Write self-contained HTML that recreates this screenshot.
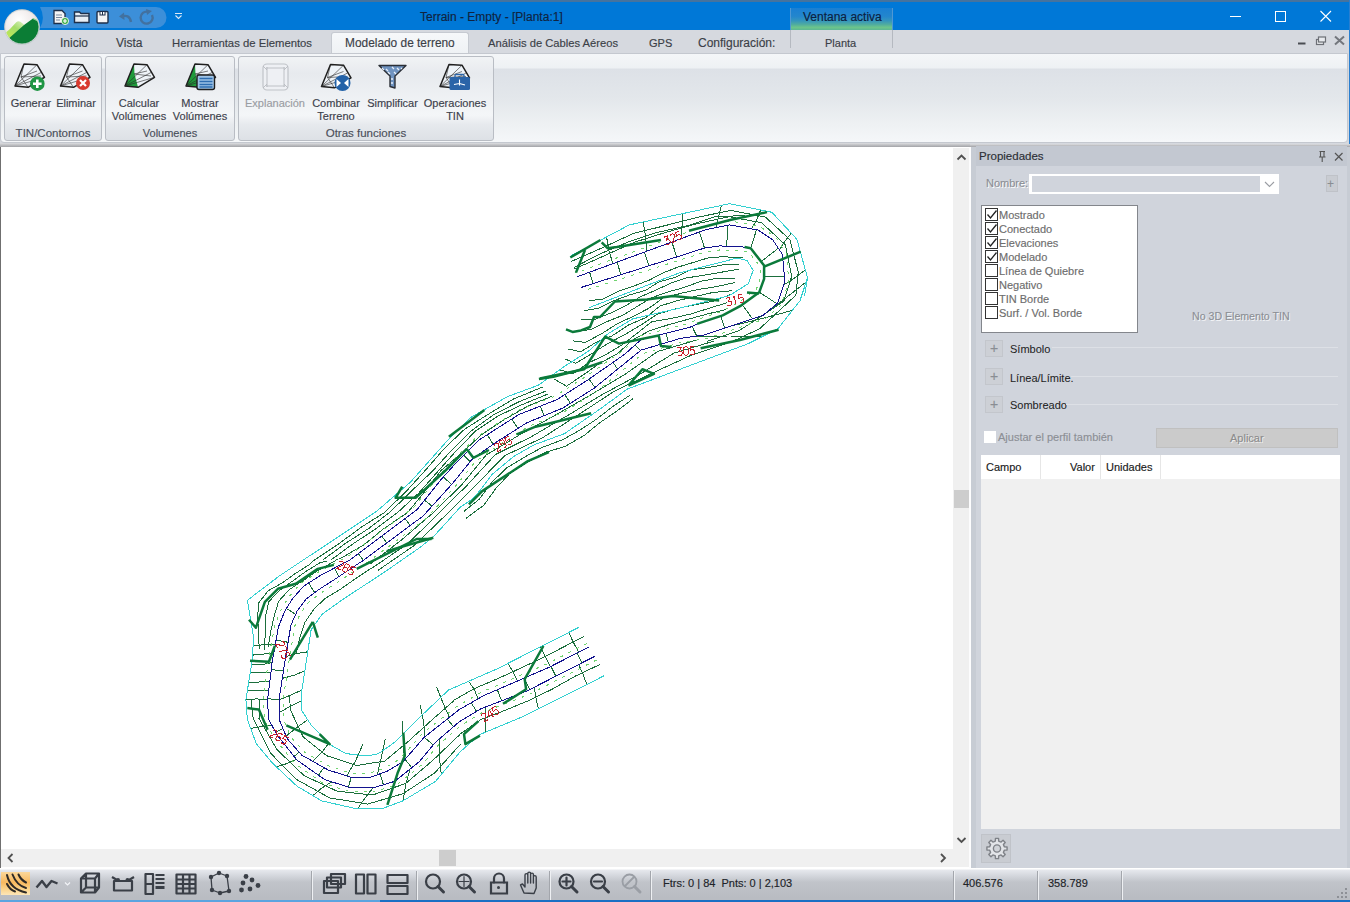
<!DOCTYPE html>
<html><head><meta charset="utf-8">
<style>
*{margin:0;padding:0;box-sizing:border-box}
html,body{width:1350px;height:902px;overflow:hidden;background:#fff;font-family:"Liberation Sans",sans-serif;font-size:12px;color:#333;-webkit-text-stroke:0.15px currentColor}
.a{position:absolute}
.t{position:absolute;white-space:nowrap;line-height:1}
#title{left:0;top:0;width:1350px;height:30px;background:#0078d7}
#tabs{left:0;top:30px;width:1350px;height:25px;background:#d6d9df}
#ribbon{left:0;top:54px;width:1350px;height:90px;background:#d6d9df}
.grp{position:absolute;top:2px;height:85px;border:1px solid #b9bdc4;border-radius:3px;background:linear-gradient(#f1f3f5,#e7eaee 20%,#f4f6f8 70%,#e6e9ed 82%,#dde1e6)}
.gl{position:absolute;left:0;right:0;bottom:1px;text-align:center;font-size:11.5px;color:#4a4f5a;line-height:1}
.btn{position:absolute;text-align:center;font-size:11px;color:#3c414b;line-height:13px;white-space:nowrap}
.tab{position:absolute;top:7px;font-size:12px;color:#3b3f47;white-space:nowrap;line-height:12px}
#canvas{left:0;top:147px;width:970px;height:721px;background:#fff}
#panel{left:970px;top:144px;width:380px;height:724px;background:#d0d4dc}
#status{left:0;top:868px;width:1350px;height:34px;background:linear-gradient(#ffffff 0,#ffffff 1px,#e6e8ed 2px,#d3d6dc 8px,#c1c4ca 14px,#b9bcc2 30px)}
.ck{position:absolute;left:3px;width:13px;height:13px;border:1px solid #333;background:#fff}
.cl{position:absolute;left:17px;font-size:11px;color:#6d6d6d;line-height:12px;white-space:nowrap}
.plus{position:absolute;left:15px;width:18px;height:17px;border:1px solid #c3c6cc;background:#cdd0d6;color:#8a8d93;font-size:14px;text-align:center;line-height:15px}
.sec{position:absolute;left:40px;font-size:11px;-webkit-text-stroke:0.05px currentColor;color:#1e1e1e;line-height:12px}
.sep{position:absolute;height:1px;background:#dde0e6}
.sb{position:absolute;top:3px;width:2px;height:29px;border-left:1px solid #a3a6ac;border-right:1px solid #eef0f3}
</style></head><body>
<!-- TITLE BAR -->
<div id="title" class="a">
 <div class="a" style="left:0;top:0;width:1350px;height:2px;background:#46739e"></div>
 <svg class="a" style="left:0;top:0" width="200" height="30">
  <path d="M40 7 H156 A10 10 0 0 1 156 28 H40 A22 22 0 0 0 40 7Z" fill="#3c8fd9"/>
  <!-- new doc -->
  <path d="M54 10.5h8l3 3v10h-11z" fill="#f4f4f4" stroke="#1d2f4a" stroke-width="1.3"/>
  <path d="M56 15h6M56 17.5h6M56 20h4" stroke="#7a8aa0" stroke-width="1"/>
  <circle cx="65" cy="21" r="3.6" fill="#3fae49" stroke="#fff" stroke-width="0.8"/>
  <path d="M63 21h4M65 19v4" stroke="#fff" stroke-width="1.2"/>
  <!-- open -->
  <path d="M74.5 12h5l1.5 1.5h8v9h-14.5z" fill="#e8eef5" stroke="#1d2f4a" stroke-width="1.4"/>
  <path d="M75 16h14" stroke="#1d2f4a" stroke-width="1.2"/>
  <!-- save -->
  <rect x="97" y="11.5" width="11" height="11.5" rx="1" fill="#f4f4f4" stroke="#1d2f4a" stroke-width="1.4"/>
  <rect x="99.5" y="11.5" width="6" height="4" fill="#1d2f4a"/>
  <rect x="100.5" y="12" width="1.5" height="2.5" fill="#fff"/><rect x="103" y="12" width="1.5" height="2.5" fill="#fff"/>
  <!-- undo -->
  <path d="M131 22 C130 16 126 15 122 16.5" fill="none" stroke="#42719f" stroke-width="2.4"/>
  <path d="M119 16.5 L124 12.5 L124.5 20z" fill="#42719f"/>
  <!-- redo -->
  <path d="M152 15 A6 6 0 1 1 148 11.8" fill="none" stroke="#42719f" stroke-width="2.4"/>
  <path d="M146 9 L152 11 L147 15z" fill="#42719f"/>
  <path d="M175 13.5h7M175.5 15.5l3 3 3-3" stroke="#dce8f5" stroke-width="1.1" fill="none"/>
 </svg>
 <div class="t" style="left:420px;top:11px;font-size:12px;color:#10233f">Terrain - Empty - [Planta:1]</div>
 <div class="a" style="left:790px;top:8px;width:103px;height:22px;background:linear-gradient(#1a7fd3 0%,#2386cd 38%,#3495bd 58%,#50ac9f 75%,#6cc58b 88%,#5cb795 100%);border-left:1px solid #4f98d4;border-right:1px solid #4f98d4"></div>
 <div class="t" style="left:803px;top:11px;font-size:12px;color:#0b2040">Ventana activa</div>
 <svg class="a" style="left:1220px;top:0" width="130" height="30">
  <path d="M10 16.5h11" stroke="#fff" stroke-width="1"/>
  <rect x="55.5" y="11.5" width="10" height="10" fill="none" stroke="#fff" stroke-width="1"/>
  <path d="M100.5 11l10.5 10.5M111 11l-10.5 10.5" stroke="#fff" stroke-width="1.1"/>
 </svg>
</div>
<!-- TABS -->
<div id="tabs" class="a">
 <div class="a" style="left:331px;top:2px;width:138px;height:23px;background:linear-gradient(#f6f8fa,#eef1f4);border:1px solid #c6cad1;border-bottom:none;border-radius:3px 3px 0 0"></div>
 <div class="tab" style="left:60px">Inicio</div>
 <div class="tab" style="left:116px">Vista</div>
 <div class="tab" style="left:172px;font-size:11.3px">Herramientas de Elementos</div>
 <div class="tab" style="left:345px;font-size:11.9px">Modelado de terreno</div>
 <div class="tab" style="left:488px;font-size:11.2px">Análisis de Cables Aéreos</div>
 <div class="tab" style="left:649px;font-size:11px">GPS</div>
 <div class="tab" style="left:698px">Configuración:</div>
 <div class="tab" style="left:825px;font-size:11px">Planta</div>
 <div class="a" style="left:790px;top:0;width:1px;height:18px;background:#b5b9c0"></div>
 <div class="a" style="left:892px;top:0;width:1px;height:18px;background:#b5b9c0"></div>
 <svg class="a" style="left:1290px;top:0" width="60" height="25">
  <path d="M8 13.5h7.5" stroke="#4a4d52" stroke-width="2"/>
  <rect x="26.5" y="9.5" width="7" height="5" fill="#e8eaee" stroke="#6d7076" stroke-width="1.2"/>
  <rect x="28.5" y="7" width="7" height="5" fill="#e8eaee" stroke="#6d7076" stroke-width="1.2"/>
  <path d="M45 6.5l9 8M54 6.5l-9 8" stroke="#74777d" stroke-width="2"/>
 </svg>
</div>
<!-- logo -->
<svg class="a" style="left:3px;top:7.5px" width="40" height="40">
 <defs>
  <radialGradient id="lg1" cx="0.4" cy="0.3" r="0.75"><stop offset="0" stop-color="#ffffff"/><stop offset="0.6" stop-color="#efe9e9"/><stop offset="1" stop-color="#c9cdd0"/></radialGradient>
  <linearGradient id="lg2" x1="0" y1="1" x2="1" y2="0"><stop offset="0" stop-color="#c6ec4e"/><stop offset="0.6" stop-color="#a5dc6a"/><stop offset="1" stop-color="#dff2c8"/></linearGradient>
  <clipPath id="lc"><circle cx="19" cy="19" r="17"/></clipPath>
 </defs>
 <circle cx="19" cy="19" r="17.8" fill="#b7c0c4"/>
 <circle cx="19" cy="19" r="17" fill="url(#lg1)"/>
 <g clip-path="url(#lc)">
  <path d="M0 27 L7 21 L13 14.5 Q16 12 19 15 L22 17.5 L8 31 Z" fill="url(#lg2)"/>
  <path d="M4 32 L12 25 L21 17 L30 10.5 L36 13 L40 20 L40 40 L0 40 Z" fill="#0b7d35"/>
  <path d="M30 10.5 L35 13 L37 19" fill="none" stroke="#8fd49a" stroke-width="1.2"/>
 </g>
 <circle cx="19" cy="19" r="17" fill="none" stroke="#d9dedf" stroke-width="0.8"/>
</svg>
<!-- RIBBON -->
<div id="ribbon" class="a">
 <div class="a" style="left:0;top:-1px;width:1348px;height:90px;border:1px solid #c4c8cf;border-radius:0 0 4px 4px;background:linear-gradient(#f4f6f8 0,#eef1f4 14px,#dde1e7 15px,#e3e7eb 50%,#eef1f3 80%,#f5f7f9 100%)"></div>
 <div class="grp" style="left:4px;width:98px"><div class="gl">TIN/Contornos</div></div>
 <div class="grp" style="left:105px;width:130px"><div class="gl" style="font-size:11px">Volumenes</div></div>
 <div class="grp" style="left:238px;width:256px"><div class="gl" style="font-size:11.5px">Otras funciones</div></div>
 <div class="btn" style="left:10px;top:43px;width:42px">Generar</div>
 <div class="btn" style="left:55px;top:43px;width:42px">Eliminar</div>
 <div class="btn" style="left:111px;top:43px;width:56px">Calcular<br>Volúmenes</div>
 <div class="btn" style="left:172px;top:43px;width:56px">Mostrar<br>Volúmenes</div>
 <div class="btn" style="left:244px;top:43px;width:62px;color:#9a9da3">Explanación</div>
 <div class="btn" style="left:310px;top:43px;width:52px">Combinar<br>Terreno</div>
 <div class="btn" style="left:365px;top:43px;width:55px">Simplificar</div>
 <div class="btn" style="left:422px;top:43px;width:66px">Operaciones<br>TIN</div>
 <svg class="a" style="left:0;top:0" width="500" height="45">
  <defs>
   <g id="tin">
    <path d="M0 22 L9 0 L22 0.7 L29.5 13.3 L13 23.3 Z" fill="#eef3f8" stroke="#1f1f1f" stroke-width="1.5" stroke-linejoin="round"/>
    <path d="M0 22 L22 0.7 M0 22 L26 8.5 M0 22 L29.5 13.3 M9 0 L6 13 L13 23.3 M6 13 L22 7 M6 13 L26 12" fill="none" stroke="#2a2a2a" stroke-width="0.6"/>
   </g>
   <g id="tingreen">
    <path d="M0 22 L9 0 L22 0.7 L29.5 13.3 L13 23.3 Z" fill="#eef3f8"/>
    <path d="M0 22 L9 0 L9.5 10 L13 23.3 Z" fill="#1f9a3a"/>
    <path d="M0 22 L9 0 L22 0.7 L29.5 13.3 L13 23.3 Z" fill="none" stroke="#1f1f1f" stroke-width="1.5" stroke-linejoin="round"/>
    <path d="M0 22 L22 0.7 M0 22 L26 8.5 M0 22 L29.5 13.3 M9 10 L22 7 M9 10 L26 12" fill="none" stroke="#2a2a2a" stroke-width="0.6"/>
   </g>
  </defs>
  <use href="#tin" x="15" y="10"/>
  <circle cx="37.3" cy="29.7" r="7.3" fill="#1f9644"/>
  <path d="M33 29.7h8.6M37.3 25.4v8.6" stroke="#fff" stroke-width="2.6"/>
  <use href="#tin" x="60.5" y="10"/>
  <circle cx="83" cy="29" r="7" fill="#d8392e"/>
  <path d="M80 26l6 6M86 26l-6 6" stroke="#fff" stroke-width="2.2"/>
  <use href="#tingreen" x="125" y="10"/>
  <use href="#tingreen" x="186" y="10"/>
  <rect x="197" y="21" width="17.5" height="14.5" rx="2" fill="#9ec3e6" stroke="#1f1f1f" stroke-width="1.4"/>
  <path d="M199.5 24.5h13M199.5 27.5h13M199.5 30.5h13M199.5 33h13" stroke="#2e6db0" stroke-width="1.3"/>
  <!-- explanacion -->
  <rect x="263" y="10" width="25" height="26" rx="4" fill="#eef0f4" stroke="#c0c3c8" stroke-width="1.2"/>
  <path d="M266 14h19M266 32h19M267 13v20M284 13v20M263 12l4 4M288 12l-4 4M263 34l4-4M288 34l-4-4" stroke="#b8bbc1" stroke-width="0.9"/>
  <!-- combinar -->
  <use href="#tin" x="321.5" y="10.5"/>
  <circle cx="342.5" cy="29" r="8" fill="#2362a8"/>
  <path d="M336.5 25v8l4.5-4zM348.5 25v8l-4.5-4z" fill="#fff"/>
  <!-- simplificar -->
  <path d="M379 11.5 H406 L395 22 V34 L390 32.5 V22 Z" fill="#6f93c0" stroke="#2b2f36" stroke-width="1.4" stroke-linejoin="round"/>
  <path d="M382 14l2 2M386 15l2 2M392 13l2 2M397 14l2 2M401 14l1 1M388 18l2 2M394 18l2 2M391 25l2 0M391 29l2 0" stroke="#e8f0fa" stroke-width="1.3"/>
  <!-- operaciones -->
  <use href="#tin" x="440" y="10.5"/>
  <rect x="449.5" y="23" width="20.5" height="13" rx="1.5" fill="#2a64a8"/>
  <rect x="455" y="20.5" width="9" height="3.5" rx="1" fill="none" stroke="#2a64a8" stroke-width="1.3"/>
  <path d="M459.5 25.5v6M454 30.5l5.5-1 5.5 1.5" stroke="#fff" stroke-width="1.1" fill="none"/>
 </svg>
</div>
<div class="a" style="left:0;top:143px;width:970px;height:4px;background:linear-gradient(#dcdde0,#a2a3a7)"></div>
<div class="a" style="left:1349px;top:0;width:1px;height:902px;background:#2a7fd0"></div>
<!-- CANVAS -->
<div id="canvas" class="a">
 <div class="a" style="left:0;top:0;width:1px;height:721px;background:#6f6f6f"></div>
 <!-- vscroll -->
 <div class="a" style="left:953px;top:1px;width:17px;height:702px;background:#f0f0f0"></div>
 <svg class="a" style="left:953px;top:1px" width="17" height="702">
  <path d="M4.5 11.5l4-4 4 4" fill="none" stroke="#505050" stroke-width="1.8"/>
  <rect x="1" y="342" width="15" height="18" fill="#cdcdcd"/>
  <path d="M4.5 690l4 4 4-4" fill="none" stroke="#505050" stroke-width="1.8"/>
 </svg>
 <!-- hscroll -->
 <div class="a" style="left:1px;top:702px;width:969px;height:18px;background:#f0f0f0"></div>
 <svg class="a" style="left:1px;top:702px" width="969" height="18">
  <path d="M11.5 5l-4 4 4 4" fill="none" stroke="#505050" stroke-width="1.8"/>
  <rect x="438" y="1" width="17" height="16" fill="#cdcdcd"/>
  <path d="M940 5l4 4-4 4" fill="none" stroke="#505050" stroke-width="1.8"/>
 </svg>
 <div class="a" style="left:969px;top:0;width:1px;height:721px;background:#fcfcfd"></div>
 <svg class="a" style="left:0;top:-147px" width="953" height="849" viewBox="0 0 953 849">
<defs><clipPath id="cv"><rect x="1" y="148" width="952" height="701"/></clipPath></defs><g clip-path="url(#cv)" fill="none" stroke-linejoin="round">
<g stroke="#1b6e3c" stroke-width="1" shape-rendering="crispEdges"><polyline points="583.8,636.5 562.9,647.3 541.1,658.6 518.6,669.1 496.7,679.1 474.7,688.4 453.8,700.3"/><polyline points="599.7,664.6 575.2,676.2 552.2,689.2 528.6,700.6 505.2,710.3 480.8,719.6 458.9,734.9"/><polyline points="460.1,734.3 433.2,760.0 405.7,783.5 372.6,795.0 337.1,791.2 303.9,775.5 277.1,749.7 259.0,718.5 259.4,699.9"/><polyline points="460.6,744.1 434.8,772.8 403.2,793.6 367.7,804.1 329.6,797.9 296.1,779.2 270.4,753.0 253.2,718.4 251.1,700.1"/><polyline points="454.0,700.6 431.3,720.5 408.5,741.2 384.8,761.0 356.8,765.5 326.6,755.7 303.2,737.0 290.4,709.9 289.5,694.8"/><polyline points="268.2,647.1 270.8,631.3 274.3,615.6 278.7,601.2 289.3,589.6 302.1,581.2 317.3,571.0 330.5,563.5 337.9,559.1"/><polyline points="264.6,649.8 265.2,632.6 265.6,616.2 268.8,601.6 280.3,589.8 291.2,582.1 305.9,571.4 319.8,562.9 326.7,561.1"/><polyline points="259.2,649.5 258.6,632.9 257.7,618.3 258.5,603.0 268.4,590.6 282.3,582.9 295.5,573.4 309.0,564.8 314.3,560.0"/><polyline points="296.1,653.6 299.6,638.6 304.9,622.3 313.7,609.5 324.9,598.5 340.3,589.4 353.8,579.8 366.5,571.3 373.7,566.8"/><polyline points="339.5,559.0 363.7,545.0 383.3,529.0 407.7,512.5 424.1,492.4 441.2,470.4 462.3,452.5 480.9,435.2 503.3,420.1 528.5,405.8 552.1,396.3"/><polyline points="330.5,560.3 353.2,543.7 375.4,529.1 398.6,511.6 418.6,493.2 436.7,472.8 455.8,451.2 475.9,430.7 498.6,415.7 521.8,404.8 548.2,393.9"/><polyline points="322.6,560.2 344.7,543.9 368.7,528.5 390.6,511.6 411.4,491.1 432.4,471.2 450.9,451.0 472.1,430.2 494.3,414.3 519.1,401.7 545.5,391.2"/><polyline points="312.6,561.3 337.3,544.9 362.0,526.7 384.7,512.4 407.0,490.5 425.0,470.7 444.3,448.5 464.6,429.2 490.1,413.1 513.8,398.9 542.5,387.1"/><polyline points="369.9,564.3 400.8,540.5 432.2,513.7 461.3,485.3 486.3,454.9 521.5,433.7 556.0,414.8 592.2,394.0 625.6,373.9 657.4,351.6 697.3,339.8"/><polyline points="372.9,567.5 408.4,543.2 437.7,514.2 466.3,486.1 495.3,454.6 531.7,436.5 568.8,414.8 602.0,394.7 639.2,374.7 673.8,353.2 714.5,340.9"/><polyline points="377.9,570.4 414.2,545.5 443.9,516.9 473.9,487.2 504.6,455.7 542.5,437.8 578.5,414.7 614.3,391.2 651.6,373.4 689.8,355.9 730.6,341.9"/><polyline points="463.6,511.6 479.5,499.0 491.9,482.3 506.5,468.0 524.4,457.2 541.6,447.7 562.8,439.6 580.3,429.9 596.6,419.1 613.2,406.2 630.5,394.9"/><polyline points="466.1,518.2 483.6,505.4 495.8,488.5 509.7,473.5 526.4,462.8 545.5,452.2 564.5,446.7 584.1,435.5 599.8,422.7 616.7,411.2 633.0,398.7"/><polyline points="706.9,341.3 739.0,330.7 764.4,314.3 783.8,301.2 791.7,276.3 785.5,245.0 761.6,222.7 728.9,216.7 696.9,223.7 665.3,232.5 634.2,242.3 604.4,255.7 574.4,269.0"/><polyline points="729.4,342.9 759.7,328.7 784.5,305.8 795.9,295.1 798.2,272.1 790.0,239.8 765.6,217.2 731.3,210.4 698.7,217.0 666.3,225.3 633.0,233.6 602.5,247.7 571.2,261.5"/><polyline points="588.7,300.7 603.3,299.0 617.8,291.4 633.0,286.4 649.1,280.2 663.9,272.6 677.5,267.2 694.8,262.0 710.1,257.3 724.8,256.8 742.9,258.0"/><polyline points="584.5,310.6 598.2,308.4 613.5,300.9 630.2,294.7 645.8,290.3 658.2,282.2 675.9,277.1 690.7,269.8 706.3,267.9 722.8,264.9 739.1,264.0"/><polyline points="581.4,319.7 594.7,319.5 610.6,313.1 624.2,306.6 640.5,296.7 654.4,290.8 671.1,283.0 686.6,277.9 703.8,275.3 719.6,272.5 739.0,269.2"/><polyline points="577.3,331.0 590.5,329.7 604.8,322.5 622.4,315.4 636.2,307.1 651.4,297.9 666.3,292.4 683.8,287.6 700.7,281.3 718.6,278.0 735.5,278.1"/><polyline points="573.2,340.9 585.3,342.5 602.3,333.3 617.5,323.6 633.4,316.3 649.0,308.2 663.2,297.9 682.4,293.0 698.6,289.4 715.5,286.8 735.1,282.5"/><polyline points="568.5,349.0 580.6,351.9 595.7,342.5 612.0,335.9 628.8,324.8 645.7,317.7 660.0,306.0 677.0,300.8 695.4,296.4 712.8,292.5 731.7,290.8"/><polyline points="564.7,358.9 575.8,363.2 592.1,353.4 607.5,343.8 626.3,333.7 640.7,325.1 657.5,314.1 674.0,309.2 692.7,305.2 712.4,301.4 730.4,294.6"/><polyline points="558.6,369.4 572.8,373.9 588.5,362.8 604.4,355.5 622.0,345.0 638.3,332.4 651.6,321.8 671.5,318.4 691.6,313.8 709.0,308.3 727.0,302.7"/><polyline points="554.6,379.2 566.4,386.2 584.5,374.1 599.6,363.3 617.5,353.7 632.0,340.4 649.2,330.9 667.9,324.9 687.7,319.4 705.4,314.5 726.3,309.4"/><polyline points="745.5,215.4 714.4,216.9 686.9,225.9 656.6,232.6 628.1,242.1 600.5,253.7 573.6,267.6"/><polyline points="578.6,652.2 573.0,641.7 568.9,632.4"/><polyline points="550.4,666.6 545.7,657.6 540.5,646.8"/><polyline points="517.3,681.0 512.9,671.9 508.1,663.2"/><polyline points="478.0,698.9 474.2,689.2 468.6,681.3"/><polyline points="578.7,664.5 583.1,674.4 586.8,684.5"/><polyline points="534.3,687.2 536.0,698.2 538.4,708.9"/><polyline points="485.5,707.1 485.5,719.2 485.8,732.1"/><polyline points="439.3,739.0 439.3,756.7 441.3,774.5"/><polyline points="410.0,769.2 405.8,784.2 403.0,800.8"/><polyline points="373.0,787.8 364.4,798.9 357.4,809.0"/><polyline points="331.8,781.8 321.6,788.2 312.9,795.7"/><polyline points="296.4,759.4 286.2,763.8 276.3,766.8"/><polyline points="271.8,725.3 260.4,726.8 250.7,728.4"/><polyline points="449.4,717.3 442.8,702.4 436.7,687.2"/><polyline points="425.0,736.7 423.5,721.1 420.1,704.8"/><polyline points="404.4,760.0 403.4,740.8 402.3,721.0"/><polyline points="377.3,774.8 381.7,755.8 385.3,738.7"/><polyline points="346.8,775.9 355.6,760.7 362.8,744.4"/><polyline points="312.6,761.2 321.5,752.7 328.9,743.1"/><polyline points="286.1,736.0 296.7,727.6 307.7,719.7"/><polyline points="279.1,712.5 289.5,706.8 301.5,700.6"/><polyline points="267.6,699.8 256.5,698.9 245.9,699.8"/><polyline points="268.7,690.5 257.1,690.3 247.3,690.9"/><polyline points="269.8,681.2 258.8,682.0 248.8,682.0"/><polyline points="271.0,672.0 261.5,672.4 250.2,673.0"/><polyline points="272.1,662.7 262.7,664.4 251.6,664.1"/><polyline points="273.7,653.5 264.0,654.0 252.5,655.1"/><polyline points="275.3,644.3 263.6,644.6 253.1,646.1"/><polyline points="279.0,700.0 291.4,694.8 301.9,690.0"/><polyline points="282.3,678.3 293.4,675.5 304.8,670.9"/><polyline points="285.7,656.5 297.2,653.5 307.8,651.8"/><polyline points="695.1,336.3 728.3,336.0 763.1,336.2"/><polyline points="730.0,326.3 760.4,319.0 792.4,310.4"/><polyline points="764.2,314.3 785.7,298.1 806.9,281.3"/><polyline points="783.6,285.1 794.7,277.9 805.3,269.9"/><polyline points="779.4,250.0 785.3,240.6 791.3,233.2"/><polyline points="751.6,228.8 756.7,219.9 760.6,210.0"/><polyline points="715.8,227.7 718.6,216.6 721.5,205.4"/><polyline points="681.1,238.6 682.1,225.3 682.3,213.7"/><polyline points="647.0,251.2 645.6,236.1 643.2,222.0"/><polyline points="612.8,263.7 608.8,249.9 606.6,237.0"/><polyline points="576.9,653.1 581.9,662.9"/><polyline points="550.9,666.4 555.9,676.2"/><polyline points="524.2,678.1 529.9,689.4"/><polyline points="497.3,689.7 501.6,700.8"/><polyline points="471.2,702.7 476.5,711.4"/><polyline points="447.1,719.1 453.6,726.6"/><polyline points="424.2,737.3 433.3,744.9"/><polyline points="405.1,759.3 411.8,767.7"/><polyline points="380.0,773.8 383.4,784.8"/><polyline points="351.4,777.2 348.3,787.0"/><polyline points="323.9,767.6 318.5,775.2"/><polyline points="299.2,752.2 294.0,756.4"/><polyline points="282.9,728.5 275.7,732.4"/><polyline points="279.0,700.0 267.7,698.6"/><polyline points="283.4,671.1 271.3,669.6"/><polyline points="288.1,642.3 276.1,640.1"/><polyline points="295.7,614.3 286.4,608.5"/><polyline points="314.7,592.6 308.6,583.0"/><polyline points="339.0,576.5 334.5,568.0"/><polyline points="363.4,560.3 358.4,553.6"/><polyline points="386.8,542.9 381.8,536.1"/><polyline points="410.3,525.5 405.2,518.6"/><polyline points="432.0,506.1 424.6,500.2"/><polyline points="451.6,484.5 443.4,477.0"/><polyline points="470.1,461.8 463.6,455.3"/><polyline points="493.2,444.2 487.2,434.8"/><polyline points="517.9,428.5 511.8,419.0"/><polyline points="544.0,415.7 540.3,406.2"/><polyline points="570.4,403.3 564.8,394.5"/><polyline points="595.0,387.5 589.1,379.1"/><polyline points="617.7,369.1 613.0,362.4"/><polyline points="640.4,350.7 635.2,344.9"/><polyline points="668.2,342.0 666.0,333.3"/><polyline points="696.7,336.0 692.0,326.3"/><polyline points="724.8,328.1 720.8,316.0"/><polyline points="752.5,318.8 742.2,304.7"/><polyline points="776.9,303.7 759.3,292.2"/><polyline points="784.4,276.0 764.1,276.0"/><polyline points="778.3,248.2 761.1,261.6"/><polyline points="756.5,229.7 750.7,248.3"/><polyline points="727.7,225.3 726.7,246.2"/><polyline points="699.4,232.0 704.5,248.1"/><polyline points="671.9,242.0 676.7,256.9"/><polyline points="644.5,252.1 648.9,265.8"/><polyline points="617.0,262.1 621.0,274.7"/><polyline points="589.6,272.2 593.2,283.6"/></g>
<g stroke="#6fd36f" stroke-width="1" stroke-dasharray="3 6" shape-rendering="crispEdges"><polyline points="587.1,643.4 547.2,663.8 482.0,692.0 456.9,706.3 421.5,734.4 400.3,758.7 385.0,767.9 369.8,773.2 351.5,773.3 329.6,766.3 304.3,752.0 290.7,736.8 283.0,718.5 283.0,700.4 288.7,663.1 294.8,626.1 300.5,613.2 309.2,601.6 321.2,592.8 338.1,581.9 366.2,563.3 377.4,554.9 425.7,519.0 455.6,486.0 475.5,461.5 498.2,445.6 528.8,426.3 564.7,411.6 596.3,391.6 643.1,353.6 680.9,342.4 705.4,338.8 749.6,324.0 764.9,318.9 781.0,305.4 788.9,281.6 786.2,253.3 775.5,237.0 759.3,226.2 729.5,220.9 703.7,226.1 575.6,273.0"/><polyline points="596.6,659.9 528.4,694.7 482.4,712.5 461.6,725.0 438.4,745.0 422.1,764.6 396.8,784.8 374.2,791.8 350.1,791.7 322.9,783.2 294.3,763.0 274.2,737.9 264.6,720.4 263.6,699.5 268.3,660.4 274.6,625.8 281.1,609.4 289.3,596.4 300.7,583.3 318.4,572.0 338.7,561.2 347.6,556.7 389.7,525.2 414.1,507.0 438.6,476.2 454.3,458.9 476.6,436.8 517.1,410.9 554.6,396.3 585.1,377.0 622.4,351.0 639.6,335.9 688.9,323.4 695.6,320.1 721.2,311.7 738.9,302.2 756.3,289.6 760.2,278.1 760.4,267.0 748.0,251.2 744.3,251.1 720.3,249.9 706.1,251.7 582.4,291.2"/></g>
<g stroke="#33d0d0" stroke-width="1" shape-rendering="crispEdges"><polyline points="604.4,675.6 523.7,716.3 479.3,734.8 460.0,752.0 435.6,781.3 403.0,800.8 383.4,808.2 357.3,809.0 321.5,800.8 297.0,786.2 272.6,763.3 256.3,743.8 247.3,719.3 245.9,699.8 252.1,661.0 253.6,637.6 247.4,600.4 261.4,589.5 280.0,575.5 303.3,560.0 330.0,542.4 376.5,511.4 410.7,481.9 447.9,440.0 470.0,417.8 507.5,396.6 538.4,385.2 564.3,366.5 588.7,351.0 608.6,333.3 633.0,318.8 680.0,308.0 728.8,295.9 748.3,283.7 753.2,270.2 747.0,260.5 737.3,258.0 680.0,272.7 588.9,307.7"/><polyline points="579.3,627.1 497.0,668.9 448.6,690.0 419.3,717.7 394.8,742.2 378.5,753.6 367.1,756.0 345.9,753.6 331.3,745.4 311.7,725.9 301.1,709.6 301.9,690.0 311.1,629.9 322.0,614.3 343.7,598.8 384.1,572.4 420.0,547.4 433.3,536.8 444.8,524.3 459.9,507.5 473.2,498.6 482.0,488.0 491.5,475.0 513.7,456.4 534.1,444.8 564.4,433.7 603.0,407.0 626.7,389.3 748.1,343.7 777.8,328.9 800.0,300.7 807.5,277.8 804.6,295.2 807.5,277.8 796.9,239.3 771.9,212.3 729.5,203.7 629.3,224.9 569.6,256.6"/></g>
<g stroke="#12128e" stroke-width="1" shape-rendering="crispEdges"><polyline points="588.9,647.0 548.9,667.4 483.7,695.6 459.2,709.6 424.2,737.3 403.0,761.7 386.7,771.5 370.4,777.2 350.8,777.2 328.0,769.9 301.9,755.2 287.3,738.9 279.1,719.3 279.0,700.0 284.7,662.5 290.9,625.2 297.1,611.2 306.4,598.8 318.9,589.5 335.9,578.6 363.9,560.0 375.0,551.7 423.1,516.0 452.6,483.4 472.7,458.6 496.0,442.3 527.0,422.7 562.9,408.0 593.9,388.4 641.1,350.1 680.0,338.5 704.4,334.9 748.3,320.2 762.9,315.4 777.6,303.2 784.9,281.2 782.4,254.4 772.7,239.8 758.0,230.0 729.5,224.9 705.0,229.9 577.0,276.8"/><polyline points="594.8,656.3 526.7,691.1 480.7,708.9 459.2,721.8 435.6,742.2 419.3,761.7 394.8,781.3 373.6,787.8 350.8,787.8 324.7,779.6 297.0,760.1 277.5,735.6 268.5,719.3 267.6,699.8 272.3,661.0 278.5,626.8 284.7,611.2 292.5,598.8 303.3,586.4 320.4,575.5 340.6,564.7 349.9,560.0 392.1,528.4 416.9,509.8 441.7,478.8 457.2,461.7 479.0,440.0 518.9,414.5 556.4,399.9 587.3,380.3 624.8,354.2 641.1,339.6 690.0,327.3 697.0,323.9 722.7,315.4 741.0,305.6 759.3,292.2 764.1,278.8 764.1,265.4 750.7,248.3 744.6,247.1 720.2,245.9 705.0,247.9 581.2,287.4"/></g>
<g stroke="#0b7a3a" stroke-width="2.5"><polyline points="570.3,257.5 600.5,240.0"/><polyline points="585.0,250.0 576.0,272.6"/><polyline points="601.7,242.4 607.5,248.2 616.8,247.0 661.0,240.0"/><polyline points="689.0,230.7 730.0,220.0 767.0,212.1"/><polyline points="566.0,329.4 572.5,331.9 581.0,330.4 590.0,327.0 594.0,317.0 600.0,317.0 614.9,301.5 647.0,299.4 672.7,295.9 719.2,300.6"/><polyline points="763.5,266.8 800.7,251.7"/><polyline points="747.0,292.4 758.8,293.6"/><polyline points="540.0,378.5 584.2,369.2 605.2,336.6 619.0,343.6 658.7,335.5 661.0,346.0 671.5,347.1"/><polyline points="700.6,348.3 740.0,340.0 778.6,329.7"/><polyline points="628.4,385.5 642.4,369.2 654.0,373.9 628.4,385.5"/><polyline points="538.9,378.9 553.3,376.7 575.6,371.1 602.2,362.2"/><polyline points="448.9,436.7 484.4,410.0"/><polyline points="402.2,486.7 395.6,497.8 415.6,497.8 446.0,470.0 466.7,448.9"/><polyline points="516.7,434.4 535.6,426.7 591.1,413.3"/><polyline points="468.9,504.4 482.2,491.1 527.8,461.1 548.9,452.2"/><polyline points="386.7,551.1 433.3,537.8"/><polyline points="466.7,448.9 473.3,457.8 488.9,450.0"/><polyline points="249.0,619.8 255.9,627.7 264.9,601.8 277.9,588.8 295.8,583.8 317.8,568.9 333.8,564.9"/><polyline points="356.7,568.9 416.6,539.0 431.5,539.0"/><polyline points="312.8,621.8 289.9,659.7"/><polyline points="312.8,621.8 317.8,637.7"/><polyline points="250.0,660.7 268.9,661.7 274.9,645.7"/><polyline points="247.3,708.1 258.9,709.6 267.6,729.8"/><polyline points="286.3,725.4 329.7,744.2 319.6,734.1"/><polyline points="403.3,732.7 404.8,755.8 397.6,773.1 387.4,804.9"/><polyline points="543.4,646.0 524.7,679.2 526.1,689.3 503.0,703.8"/><polyline points="478.4,721.1 464.0,734.1 465.4,744.2 479.9,735.6"/><polyline points="697.0,323.9 722.7,315.4 741.0,305.6 759.3,292.2 764.1,278.8 764.1,265.4 750.7,248.3 744.6,247.1"/></g>
<g stroke="#c8202a" stroke-width="1" shape-rendering="crispEdges"><polyline points="663.6,237.4 667.7,235.8 666.6,240.1 667.8,239.6 669.6,240.4 670.3,242.0 669.5,243.8 667.4,244.6 666.3,244.1"/><polyline points="669.9,236.3 670.2,234.8 672.7,233.7 674.1,234.7 674.6,235.9 672.4,242.6 676.6,240.9"/><polyline points="679.4,231.0 675.7,232.6 676.6,236.1 678.9,234.6 681.1,235.2 681.9,237.3 681.2,239.1 679.1,239.9 677.9,239.4"/><polyline points="725.7,298.3 730.0,297.1 728.4,301.3 729.7,301.0 731.3,301.9 731.8,303.7 730.8,305.3 728.7,305.9 727.6,305.3"/><polyline points="733.0,297.7 734.0,296.1 736.0,303.9"/><polyline points="742.2,293.9 738.3,294.9 738.8,298.5 741.3,297.4 743.4,298.2 744.0,300.4 743.0,302.0 740.8,302.6 739.7,302.0"/><polyline points="677.1,347.7 681.6,347.3 679.2,351.1 680.6,351.0 682.0,352.2 682.2,354.0 681.0,355.5 678.7,355.7 677.8,354.9"/><polyline points="684.3,347.1 687.0,346.8 688.0,348.1 688.5,353.5 687.7,354.9 685.0,355.2 684.0,353.9 683.5,348.5 684.3,347.1"/><polyline points="694.2,346.2 690.1,346.6 690.0,350.2 692.6,349.5 694.6,350.7 694.8,352.9 693.5,354.4 691.3,354.6 690.3,353.8"/><polyline points="494.2,445.9 494.3,444.3 496.7,443.0 498.1,443.7 498.8,444.9 497.6,451.8 501.5,449.5"/><polyline points="504.7,442.5 501.6,444.3 500.4,444.0 499.5,442.4 499.8,441.2 502.1,439.8 503.4,440.1 506.3,445.2 505.8,447.1 503.9,448.2"/><polyline points="508.4,436.2 504.9,438.2 506.3,441.6 508.4,439.8 510.6,440.1 511.8,442.1 511.3,443.9 509.3,445.0 508.1,444.7"/><polyline points="339.4,561.9 340.8,561.1 343.2,562.2 343.5,563.8 342.9,565.1 336.5,568.1 340.6,570.0"/><polyline points="345.0,567.0 344.5,565.8 345.3,564.2 346.5,563.8 348.9,564.9 349.4,566.1 348.6,567.7 347.4,568.2 345.0,567.0 343.8,567.5 342.6,569.9 343.1,571.1 345.5,572.2 346.7,571.8 347.8,569.4 347.4,568.2"/><polyline points="355.5,567.9 351.8,566.2 349.9,569.3 352.5,570.0 353.6,572.0 352.6,574.1 350.8,574.7 348.8,573.8 348.3,572.6"/><polyline points="281.8,641.1 283.4,641.4 284.6,643.8 283.7,645.2 282.5,645.8 275.7,644.0 277.6,648.0"/><polyline points="285.7,646.2 287.6,650.3 279.1,651.3"/><polyline points="290.3,656.0 288.6,652.4 285.1,653.5 286.7,655.7 286.2,657.9 284.2,658.9 282.4,658.2 281.4,656.2 281.9,655.0"/><polyline points="272.9,730.4 274.4,729.7 276.7,731.0 276.8,732.6 276.2,733.8 269.6,736.2 273.5,738.5"/><polyline points="282.4,734.8 281.4,733.7 280.2,733.0 278.2,733.9 275.7,738.2 276.2,740.1 277.8,741.0 279.6,740.5 280.5,738.9 280.0,737.1 278.4,736.2 276.6,736.7"/><polyline points="288.4,737.8 284.9,735.7 282.7,738.6 285.3,739.6 286.2,741.7 285.1,743.6 283.2,744.1 281.3,743.0 280.9,741.8"/><polyline points="481.2,715.9 481.3,714.3 483.7,713.0 485.1,713.7 485.8,714.9 484.6,721.8 488.5,719.5"/><polyline points="493.2,716.8 489.1,709.8 488.7,716.3 493.0,713.8"/><polyline points="495.4,706.2 491.9,708.2 493.3,711.6 495.4,709.8 497.6,710.1 498.8,712.1 498.3,713.9 496.3,715.0 495.1,714.7"/></g>
</g></svg>
</div>
<!-- PANEL -->
<div id="panel" class="a">
 <div class="a" style="left:0;top:0;width:380px;height:3px;background:linear-gradient(#dcdde0,#a2a3a7)"></div>
 <div class="a" style="left:0;top:3px;width:1px;height:721px;background:#fdfdfe"></div>
 <div class="a" style="left:1px;top:3px;width:5px;height:721px;background:#c7ccd4"></div>
 <div class="a" style="left:377px;top:3px;width:3px;height:721px;background:#c7ccd4"></div>
 <div class="a" style="left:6px;top:2px;width:371px;height:20px;background:#c3c8d1"></div>
 <div class="t" style="left:9px;top:7px;font-size:11.5px;color:#2c2f36">Propiedades</div>
 <svg class="a" style="left:345px;top:4px" width="35" height="18">
  <path d="M5.5 3.5v5.5M9 3.5v5.5M4 9h6.5M7.2 9v5M4.5 3.5h5.5" stroke="#555" stroke-width="1.1" fill="none"/>
  <path d="M20 5l7.5 7.5M27.5 5l-7.5 7.5" stroke="#555" stroke-width="1.2"/>
 </svg>
 <div class="t" style="left:16px;top:34px;font-size:11px;color:#8c8f95;text-shadow:1px 1px 0 #fff">Nombre:</div>
 <div class="a" style="left:59px;top:30px;width:250px;height:20px;background:#fff"></div>
 <div class="a" style="left:62px;top:32px;width:228px;height:16px;background:#d0d4dc"></div>
 <svg class="a" style="left:290px;top:30px" width="19" height="20"><path d="M5 8l4.5 4.5 4.5-4.5" fill="none" stroke="#9a9da3" stroke-width="1.1"/></svg>
 <div class="a" style="left:356px;top:31px;width:12px;height:17px;background:#c9ccd2;border:1px solid #bfc2c8"></div>
 <div class="t" style="left:357px;top:34px;font-size:12px;color:#8a8d93">+</div>
 <!-- checklist -->
 <div class="a" style="left:11px;top:61px;width:157px;height:128px;background:#fff;border:1px solid #83868c">
  <div class="ck" style="top:2px"></div><div class="cl" style="top:3px">Mostrado</div>
  <div class="ck" style="top:16px"></div><div class="cl" style="top:17px">Conectado</div>
  <div class="ck" style="top:30px"></div><div class="cl" style="top:31px">Elevaciones</div>
  <div class="ck" style="top:44px"></div><div class="cl" style="top:45px">Modelado</div>
  <div class="ck" style="top:58px"></div><div class="cl" style="top:59px">Línea de Quiebre</div>
  <div class="ck" style="top:72px"></div><div class="cl" style="top:73px">Negativo</div>
  <div class="ck" style="top:86px"></div><div class="cl" style="top:87px">TIN Borde</div>
  <div class="ck" style="top:100px"></div><div class="cl" style="top:101px">Surf. / Vol. Borde</div>
  <svg class="a" style="left:3px;top:2px" width="14" height="60">
   <path d="M2.5 6.5l3 3.5 6-7.5M2.5 20.5l3 3.5 6-7.5M2.5 34.5l3 3.5 6-7.5M2.5 48.5l3 3.5 6-7.5" fill="none" stroke="#222" stroke-width="1.3"/>
  </svg>
 </div>
 <div class="t" style="left:222px;top:167px;font-size:10.6px;color:#8c8f95;text-shadow:1px 1px 0 #f4f5f7">No 3D Elemento TIN</div>
 <!-- sections -->
 <div class="plus" style="top:196px">+</div><div class="sec" style="top:199px">Símbolo</div><div class="sep" style="left:82px;top:203px;width:286px"></div>
 <div class="plus" style="top:224px">+</div><div class="sec" style="top:228px">Línea/Límite.</div><div class="sep" style="left:101px;top:232px;width:267px"></div>
 <div class="plus" style="top:252px">+</div><div class="sec" style="top:255px">Sombreado</div><div class="sep" style="left:96px;top:260px;width:272px"></div>
 <div class="a" style="left:14px;top:287px;width:12px;height:12px;background:#fff"></div>
 <div class="t" style="left:28px;top:288px;font-size:11px;color:#8c8f95">Ajustar el perfil también</div>
 <div class="a" style="left:186px;top:284px;width:182px;height:20px;background:#cbcbcb;border:1px solid #c0c0c0"></div>
 <div class="t" style="left:260px;top:289px;font-size:11px;color:#8c8c8c;text-shadow:1px 1px 0 #eee">Aplicar</div>
 <!-- table -->
 <div class="a" style="left:11px;top:311px;width:359px;height:374px;background:#f0f0f0"></div>
 <div class="a" style="left:11px;top:311px;width:359px;height:24px;background:#fff"></div>
 <div class="a" style="left:70px;top:311px;width:1px;height:24px;background:#e6e6e6"></div>
 <div class="a" style="left:130px;top:311px;width:1px;height:24px;background:#e6e6e6"></div>
 <div class="a" style="left:190px;top:311px;width:1px;height:24px;background:#e6e6e6"></div>
 <div class="t" style="left:16px;top:318px;font-size:11px;color:#1a1a1a">Campo</div>
 <div class="t" style="left:100px;top:318px;font-size:11px;color:#1a1a1a">Valor</div>
 <div class="t" style="left:136px;top:318px;font-size:11px;color:#1a1a1a">Unidades</div>
 <!-- gear -->
 <div class="a" style="left:11px;top:690px;width:30px;height:29px;background:#c9ccd2;border:1px solid #c0c3c9"></div>
 <svg class="a" style="left:11px;top:690px" width="31" height="29">
  <path d="M23.42 12.84 L26.09 12.98 L26.09 16.02 L23.42 16.16 L22.84 17.33 L22.42 18.57 L24.21 20.55 L22.05 22.71 L20.07 20.92 L18.83 21.34 L17.66 21.92 L17.52 24.59 L14.48 24.59 L14.34 21.92 L13.17 21.34 L11.93 20.92 L9.95 22.71 L7.79 20.55 L9.58 18.57 L9.16 17.33 L8.58 16.16 L5.91 16.02 L5.91 12.98 L8.58 12.84 L9.16 11.67 L9.58 10.43 L7.79 8.45 L9.95 6.29 L11.93 8.08 L13.17 7.66 L14.34 7.08 L14.48 4.41 L17.52 4.41 L17.66 7.08 L18.83 7.66 L20.07 8.08 L22.05 6.29 L24.21 8.45 L22.42 10.43 L22.84 11.67Z" fill="#e2e4e8" stroke="#7f8288" stroke-width="1.4" stroke-linejoin="round"/>
  <circle cx="16" cy="14.5" r="3.6" fill="#d0d3d8" stroke="#7f8288" stroke-width="1.4"/>
 </svg>
</div>
<!-- STATUS -->
<div id="status" class="a">
 <div class="a" style="left:0;top:32px;width:1350px;height:2px;background:#1a6fc4"></div>
 <div class="a" style="left:0;top:32px;width:380px;height:2px;background:#5ba4e0"></div>
 <div class="a" style="left:1px;top:4px;width:29px;height:23px;background:linear-gradient(#fbd79a,#f8b95e 45%,#fbd48c 75%,#fde6b8)"></div>
 <svg class="a" style="left:0;top:0" width="660" height="32">
  <g fill="none" stroke="#2e2a26" stroke-width="2" stroke-linecap="round">
   <path d="M7 7 C9 16 14 22 26 24.5"/><path d="M12.5 6.5 C15 13 19 18 26 20"/><path d="M18.5 6.5 C20 10 23 13 26 14.5"/><path d="M7 16 C9 20 12 22.5 15 23.5"/>
  </g>
  <path d="M36.5 19.5l5.5-6.5 4.5 6 5-6 6 2.5" fill="none" stroke="#3a3f47" stroke-width="2.4" stroke-linejoin="round"/>
  <path d="M65 14.5l2.5 2.5 2.5-2.5" fill="none" stroke="#f2f4f7" stroke-width="1.2"/>
  <g fill="none" stroke="#3a3f47" stroke-width="2.2" stroke-linejoin="round">
   <path d="M81 10.5h14v14h-14zM86 5.5h13v14h-13zM81 10.5l5-5M95 10.5l4-5M81 24.5l5-5M95 24.5l4-5"/>
   <path d="M114 13h18v9.5h-18z"/><path d="M112 9l5 3M134 9l-5 3"/>
   <path d="M145.5 6h7.5v20h-7.5zM145.5 16h7.5"/>
   <path d="M176.5 6.5h19v19h-19zM176.5 11.5h19M176.5 16h19M176.5 20.5h19M183 6.5v19M189.5 6.5v19"/>
   <path d="M211 9l8-4 8 3 2 15-9 2-8-3z" stroke-width="1.3"/>
   <path d="M331 6h14v10h-14zM327 9.5h14v10h-14zM324 13h14v12h-14z" fill="#c3c6cc"/>
   <path d="M356 6.5h8v19h-8zM367.5 6.5h8v19h-8z"/>
   <path d="M387.5 7h20v8h-20zM387.5 18h20v8h-20z"/>
  </g>
  <g fill="#3a3f47">
   <rect x="155.5" y="6" width="9" height="2"/><rect x="155.5" y="10" width="9" height="2"/><rect x="155.5" y="14" width="9" height="2"/><rect x="155.5" y="18" width="9" height="3"/>
   <circle cx="118" cy="12" r="2"/><circle cx="127.5" cy="12" r="2"/>
   <circle cx="211" cy="9" r="2.2"/><circle cx="219" cy="5" r="2.2"/><circle cx="227" cy="8" r="2.2"/><circle cx="229" cy="23" r="2.2"/><circle cx="220" cy="25" r="2.2"/><circle cx="212" cy="22" r="2.2"/>
   <circle cx="246" cy="8.5" r="2.4"/><circle cx="252" cy="12" r="2.4"/><circle cx="243" cy="15" r="2.4"/><circle cx="258" cy="17.5" r="2.4"/><circle cx="250" cy="21" r="2.4"/><circle cx="241.5" cy="22" r="2.4"/>
  </g>
  <g fill="none" stroke="#3a3f47" stroke-width="2.2" stroke-linecap="round">
   <circle cx="433" cy="13.5" r="7"/><path d="M438 18.5l5.5 5.5" stroke-width="3"/>
   <circle cx="464" cy="13.5" r="7"/><path d="M469 18.5l5.5 5.5" stroke-width="3"/><path d="M464 8.5v10M459 13.5h10" stroke-width="1.2"/>
   <path d="M491 14.5h16v11h-16z"/><path d="M494 14.5v-4a5 5 0 0 1 10 0v4"/>
   <path d="M524 25 L520.5 17 L522.5 16 L525 19 V7 a1.4 1.4 0 0 1 2.8 0 V15 V5.5 a1.4 1.4 0 0 1 2.8 0 V15 V6.5 a1.4 1.4 0 0 1 2.8 0 V15 V9 a1.4 1.4 0 0 1 2.8 0 V20 L534 25.5 Z" stroke-width="1.4" stroke-linejoin="round"/>
   <circle cx="566.5" cy="13.5" r="7"/><path d="M571.5 18.5l5.5 5.5" stroke-width="3"/><path d="M566.5 9.5v8M562.5 13.5h8" stroke-width="2.2"/>
   <circle cx="598" cy="13.5" r="7"/><path d="M603 18.5l5.5 5.5" stroke-width="3"/><path d="M594 13.5h8" stroke-width="2.2"/>
  </g>
  <circle cx="498.5" cy="19.5" r="1.5" fill="#3a3f47"/>
  <g fill="none" stroke="#9a9ea5" stroke-width="1.8" stroke-linecap="round">
   <circle cx="629.5" cy="13.5" r="7"/><path d="M634.5 18.5l5.5 5.5" stroke-width="3"/><path d="M625 18l9-9"/>
  </g>
 </svg>
 <div class="sb" style="left:311px"></div>
 <div class="sb" style="left:416px"></div>
 <div class="sb" style="left:549px"></div>
 <div class="sb" style="left:650px"></div>
 <div class="t" style="left:663px;top:10px;font-size:11px;color:#202328">Ftrs: 0 | 84&nbsp; Pnts: 0 | 2,103</div>
 <div class="sb" style="left:953px"></div>
 <div class="t" style="left:963px;top:10px;font-size:11px;color:#202328">406.576</div>
 <div class="sb" style="left:1037px"></div>
 <div class="t" style="left:1048px;top:10px;font-size:11px;color:#202328">358.789</div>
 <div class="sb" style="left:1121px"></div>
 <svg class="a" style="left:1334px;top:18px" width="16" height="14">
  <g fill="#8d9096"><rect x="11" y="2" width="2" height="2"/><rect x="7" y="6" width="2" height="2"/><rect x="11" y="6" width="2" height="2"/><rect x="3" y="10" width="2" height="2"/><rect x="7" y="10" width="2" height="2"/><rect x="11" y="10" width="2" height="2"/></g>
 </svg>
</div>
</body></html>
